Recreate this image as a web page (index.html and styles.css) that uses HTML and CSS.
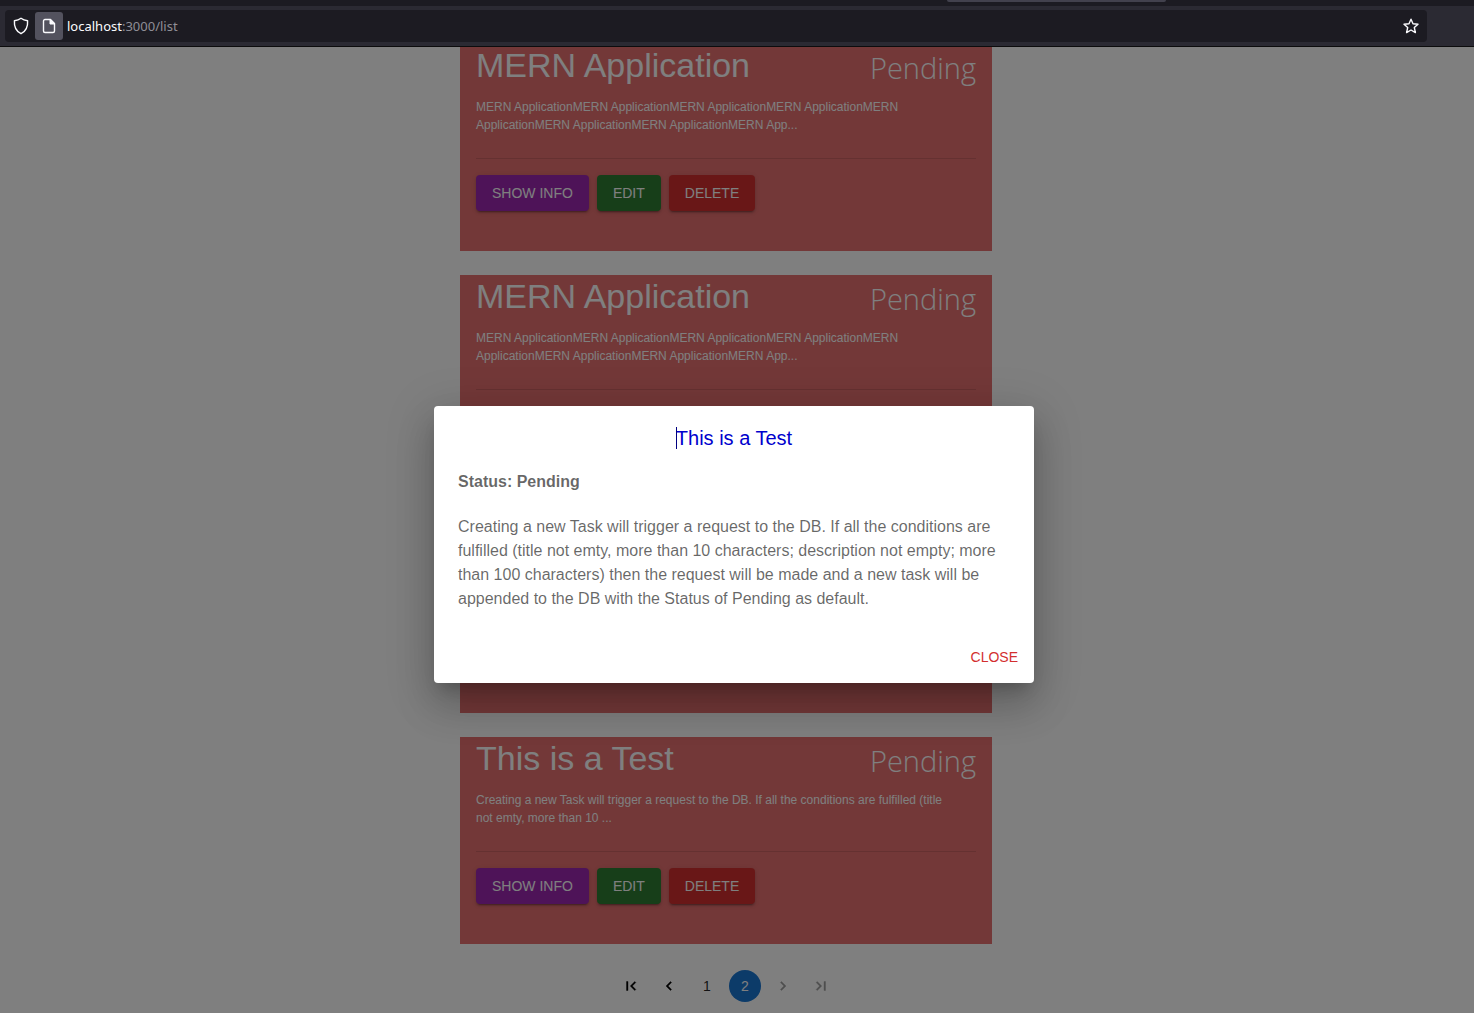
FILE: index.html
```html
<!DOCTYPE html>
<html lang="en">
<head>
<meta charset="utf-8">
<meta name="viewport" content="width=device-width, initial-scale=1">
<title>Task list</title>
<link rel="stylesheet" href="styles.css">
</head>
<body>
<header class="browser">
  <div class="tab-strip"><span class="active-tab"></span></div>
  <div class="toolbar">
    <div class="url-bar">
      <svg class="icon shield" viewBox="0 0 16 18" aria-hidden="true"><path d="M8 1.2C9.800 2.600 12 3.400 14.600 3.700C15 9.500 13.300 14 8 16.700C2.700 14 1 9.500 1.400 3.700C4 3.400 6.200 2.600 8 1.200Z"/></svg>
      <button class="page-info" type="button" aria-label="Page information">
        <svg class="icon" viewBox="0 0 16 16" aria-hidden="true"><path d="M4 1.500H9.500L13.500 5.500V13A1.500 1.500 0 0 1 12 14.500H4A1.500 1.500 0 0 1 2.500 13V3A1.500 1.500 0 0 1 4 1.500Z"/><path class="fold" d="M9 1.500V6H13.500Z"/></svg>
      </button>
      <p class="address"><span class="host">localhost</span>:3000/list</p>
      <button class="bookmark" type="button" aria-label="Bookmark this page">
        <svg class="icon" viewBox="0 0 16 16" aria-hidden="true"><path d="M8 1.200L10 5.700L15 6.200L11.300 9.500L12.400 14.600L8 12L3.600 14.600L4.700 9.500L1 6.200L6 5.700Z"/></svg>
      </button>
    </div>
  </div>
</header>

<div class="viewport">
  <main class="list">
    <article class="card">
      <div class="card-head"><h2 class="card-title">MERN Application</h2><span class="card-status">Pending</span></div>
      <p class="card-text">MERN ApplicationMERN ApplicationMERN ApplicationMERN ApplicationMERN ApplicationMERN ApplicationMERN ApplicationMERN App...</p>
      <hr class="divider">
      <div class="card-actions"><button class="btn info" type="button">SHOW INFO</button><button class="btn edit" type="button">EDIT</button><button class="btn delete" type="button">DELETE</button></div>
    </article>
    <article class="card">
      <div class="card-head"><h2 class="card-title">MERN Application</h2><span class="card-status">Pending</span></div>
      <p class="card-text">MERN ApplicationMERN ApplicationMERN ApplicationMERN ApplicationMERN ApplicationMERN ApplicationMERN ApplicationMERN App...</p>
      <hr class="divider">
    </article>
    <article class="card"></article>
    <article class="card">
      <div class="card-head"><h2 class="card-title">This is a Test</h2><span class="card-status">Pending</span></div>
      <p class="card-text">Creating a new Task will trigger a request to the DB. If all the conditions are fulfilled (title<br>not emty, more than 10 ...</p>
      <hr class="divider">
      <div class="card-actions"><button class="btn info" type="button">SHOW INFO</button><button class="btn edit" type="button">EDIT</button><button class="btn delete" type="button">DELETE</button></div>
    </article>
    <nav class="pagination" aria-label="Pages">
      <button class="page" type="button" aria-label="First page"><svg class="arrow" viewBox="0 0 24 24" aria-hidden="true"><path d="M18.410 16.590L13.820 12l4.590-4.590L17 6l-6 6 6 6zM6 6h2v12H6z"/></svg></button>
      <button class="page" type="button" aria-label="Previous page"><svg class="arrow" viewBox="0 0 24 24" aria-hidden="true"><path d="M15.410 7.410L14 6l-6 6 6 6 1.410-1.410L10.830 12z"/></svg></button>
      <button class="page" type="button">1</button>
      <button class="page current" type="button" aria-current="page">2</button>
      <button class="page" type="button" aria-label="Next page" disabled><svg class="arrow" viewBox="0 0 24 24" aria-hidden="true"><path d="M10 6L8.590 7.410 13.170 12l-4.580 4.590L10 18l6-6z"/></svg></button>
      <button class="page" type="button" aria-label="Last page" disabled><svg class="arrow" viewBox="0 0 24 24" aria-hidden="true"><path d="M5.590 7.410L10.180 12l-4.590 4.590L7 18l6-6-6-6zM16 6h2v12h-2z"/></svg></button>
    </nav>
  </main>

  <div class="backdrop">
    <section class="dialog" role="dialog" aria-modal="true" aria-labelledby="dialog-title">
      <h2 class="dialog-title" id="dialog-title"><span class="caret-text">This is a Test</span></h2>
      <div class="dialog-body">
        <p class="dialog-status">Status: Pending</p>
        <p class="dialog-text">Creating a new Task will trigger a request to the DB. If all the conditions are fulfilled (title not emty, more than 10 characters; description not empty; more than 100 characters) then the request will be made and a new task will be appended to the DB with the Status of Pending as default.</p>
      </div>
      <div class="dialog-actions"><button class="close" type="button">CLOSE</button></div>
    </section>
  </div>
</div>
</body>
</html>
```
FILE: styles.css
```css
* { box-sizing: border-box; }

body {
  margin: 0;
  height: 100vh;
  display: flex;
  flex-direction: column;
  overflow: hidden;
  font-family: "Liberation Sans", Arial, sans-serif;
  background: #fff;
}

h2, p { margin: 0; font-weight: 400; }

button {
  border: 0;
  margin: 0;
  font-family: inherit;
  background: none;
}

/* Browser bar */
.browser {
  flex: none;
  background: #2b2a33;
  border-bottom: 1px solid #0c0c0d;
}

.tab-strip {
  height: 6px;
  padding-right: 308px;
  display: flex;
  justify-content: flex-end;
  background: #1c1b22;
}

.active-tab {
  width: 219px;
  height: 2px;
  border-radius: 0 0 2px 2px;
  background: #42414d;
}

.toolbar { padding: 4px 47px 4px 5px; }

.url-bar {
  height: 32px;
  padding: 0 8px;
  display: flex;
  align-items: center;
  border-radius: 4px;
  background: #1c1b22;
}

.icon {
  display: block;
  width: 16px;
  height: 16px;
  fill: none;
  stroke: #fbfbfe;
  stroke-width: 1.4;
  stroke-linejoin: round;
}

.shield { height: 18px; }
.fold { fill: #fbfbfe; stroke-width: 1; }

.page-info {
  width: 28px;
  height: 28px;
  margin: 0 4px 0 6px;
  padding: 6px;
  border-radius: 3px;
  background: #53525e;
}

.address {
  flex: 1;
  font: 13px/20px "Noto Sans", sans-serif;
  color: #8f8e96;
}

.host { color: #fbfbfe; }
.bookmark { padding: 0; }

/* Task list, scrolled to its end */
.viewport {
  position: relative;
  flex: 1;
  min-height: 0;
  display: flex;
  flex-direction: column;
  justify-content: flex-end;
  overflow: hidden;
  padding: 0 22px 11px 0;
}

.list {
  width: 532px;
  max-width: 100%;
  margin: 0 auto;
  display: flex;
  flex-direction: column;
  gap: 24px;
}

.card {
  flex: none;
  min-height: 207px;
  padding: 0 16px;
  color: #fff;
  background: #e67070;
}

.card-head {
  display: flex;
  justify-content: space-between;
}

.card-title {
  font-size: 34px;
  line-height: 42px;
}

.card-status {
  font: 300 29px/48px "Open Sans", sans-serif;
  height: 42px;
}

.card-text {
  margin-top: 12px;
  font-size: 12px;
  line-height: 18px;
}

.divider {
  margin: 24px 0 16px;
  border: 0;
  border-top: 1px solid rgba(0, 0, 0, 0.12);
}

.card-actions { display: flex; gap: 8px; }

.btn {
  padding: 6px 16px;
  border-radius: 4px;
  font-size: 14px;
  line-height: 24px;
  color: #fff;
  box-shadow: 0 3px 1px -2px rgba(0, 0, 0, 0.2), 0 2px 2px rgba(0, 0, 0, 0.14), 0 1px 5px rgba(0, 0, 0, 0.12);
}

.info { background: #9c27b0; }
.edit { background: #2e7d32; }
.delete { background: #d32f2f; }

.pagination {
  padding-top: 2px;
  display: flex;
  justify-content: center;
  gap: 6px;
}

.page {
  width: 32px;
  height: 32px;
  padding: 0;
  display: flex;
  align-items: center;
  justify-content: center;
  border-radius: 50%;
  font-size: 14px;
  color: rgba(0, 0, 0, 0.87);
}

.page:disabled { opacity: 0.38; }
.current { color: #fff; background: #1976d2; }
.arrow { width: 18px; height: 18px; fill: #000; stroke: #000; stroke-width: 0.5; }

/* Modal */
.backdrop {
  position: absolute;
  inset: 0;
  display: flex;
  align-items: center;
  justify-content: center;
  padding: 29px 6px 0 0;
  background: rgba(0, 0, 0, 0.5);
}

.dialog {
  width: 600px;
  max-width: 100%;
  border-radius: 4px;
  background: #fff;
  color: rgba(0, 0, 0, 0.6);
  box-shadow: 0 11px 15px -7px rgba(0, 0, 0, 0.2), 0 24px 38px 3px rgba(0, 0, 0, 0.14), 0 9px 46px 8px rgba(0, 0, 0, 0.12);
}

.dialog-title {
  padding: 16px 24px;
  text-align: center;
  font-size: 20px;
  line-height: 32px;
  color: #0000cd;
}

.caret-text { position: relative; }

.caret-text::before {
  content: "";
  position: absolute;
  top: 0;
  bottom: 0;
  left: 0;
  width: 1px;
  background: #000080;
}

.dialog-body {
  padding: 0 24px 20px;
  display: grid;
  gap: 21px;
  font-size: 16px;
  line-height: 24px;
}

.dialog-status { font-weight: 700; }

.dialog-actions {
  padding: 8px;
  display: flex;
  justify-content: flex-end;
}

.close {
  padding: 6px 8px;
  border-radius: 4px;
  font-size: 14px;
  line-height: 24px;
  color: #d32f2f;
}
```
